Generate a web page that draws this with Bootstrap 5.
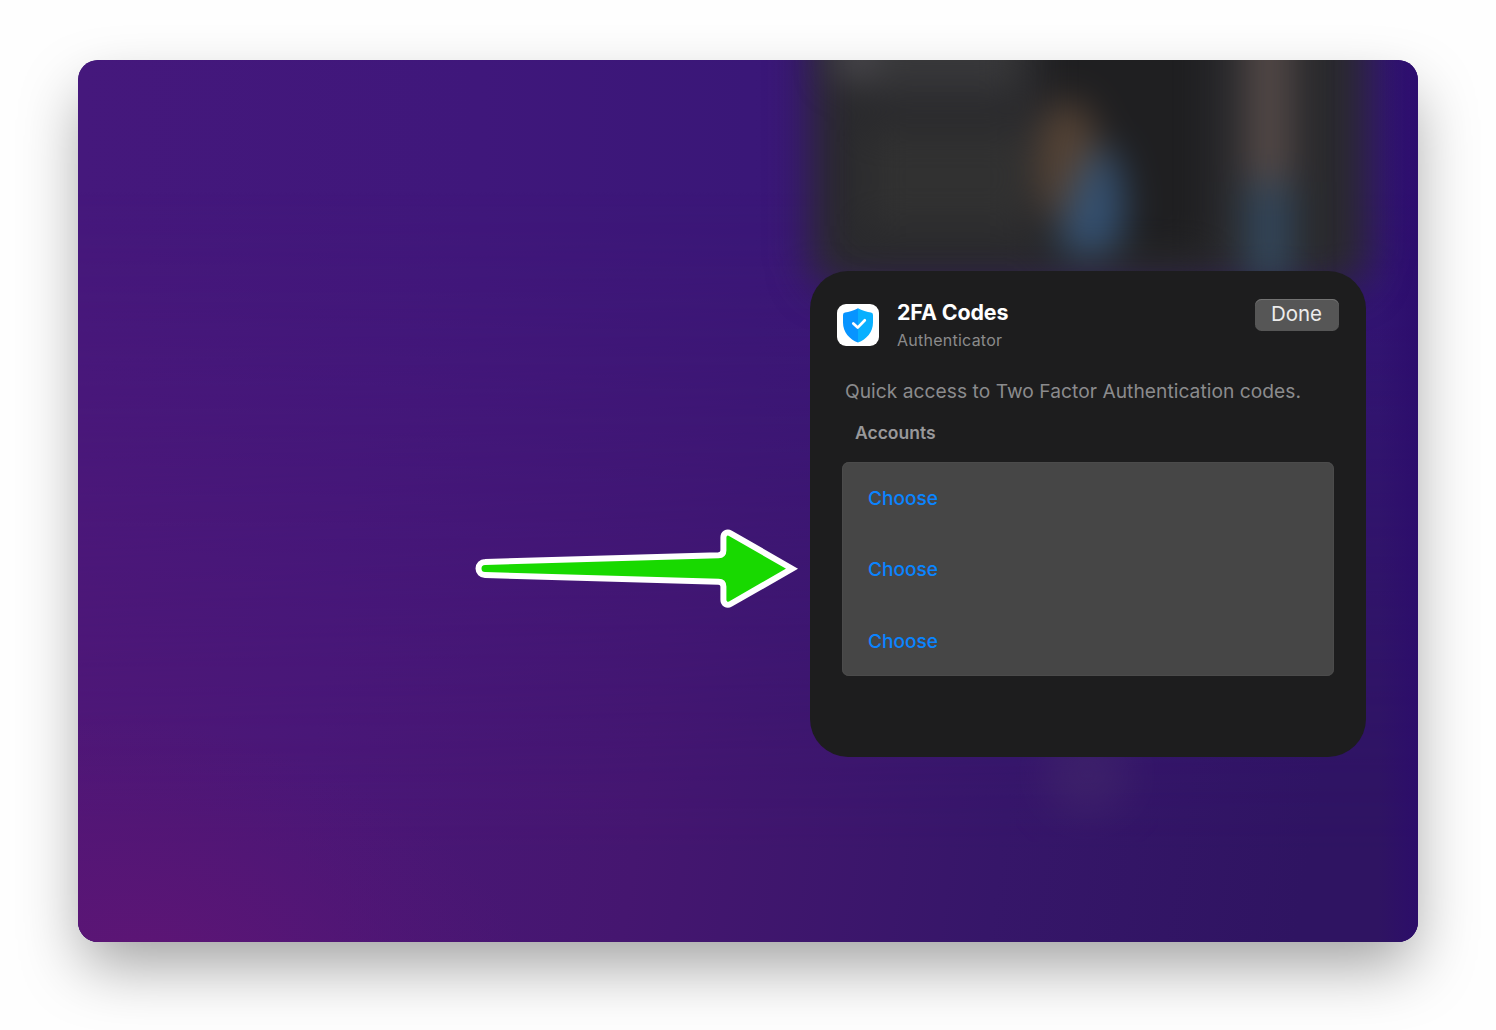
<!DOCTYPE html>
<html lang="en">
<head>
<meta charset="utf-8">
<meta name="viewport" content="width=device-width, initial-scale=1">
<title>2FA Codes widget</title>
<link href="https://cdn.jsdelivr.net/npm/bootstrap@5.3.0/dist/css/bootstrap.min.css" rel="stylesheet">
<style>
  body { background: #fefefe; font-family: Inter, "Liberation Sans", sans-serif; height: 1030px; padding: 60px 78px 0; overflow: hidden; }
  .desktop { width: 1340px; height: 882px; border-radius: 20px; box-shadow: 0 28px 62px -5px rgba(0,0,0,.37); padding: 211px 52.5px 0 0; background: #3e1777; }
  .wallpaper { border-radius: 20px; z-index: 0; }
  .pointer { left: 390px; top: 460px; z-index: 2; }
  .widget { width: 555.5px; height: 485.5px; border-radius: 38px; background: #1d1d1e; padding: 28px 27px 0; z-index: 1; }
  .widget-head { height: 66px; }
  .app-icon { margin: 5px 18px 0 0; }
  .w-title { font-size: 21.4px; font-weight: 700; line-height: 28px; color: #fff; letter-spacing: -.1px; margin-top: -1px; }
  .w-sub { font-size: 16px; line-height: 22px; color: #8b8b8c; margin-top: 3px; letter-spacing: .25px; }
  .btn-done { --bs-btn-bg: #565656; --bs-btn-color: #ececec; --bs-btn-border-color: transparent; width: 84px; height: 32px; font-size: 20.5px; line-height: 28px; padding: 0 0 2px; border: 0; border-radius: 6.5px; box-shadow: inset 0 1px 0 #737373; }
  .w-desc { font-size: 19.2px; line-height: 26px; color: #8b8b8d; padding-left: 8px; margin-top: 12.5px; letter-spacing: .04px; }
  .w-label { font-size: 17.5px; font-weight: 600; line-height: 24px; color: #98989a; padding-left: 18px; margin-top: 17.5px; }
  .accounts { --bs-list-group-bg: #464646; --bs-list-group-border-width: 0; --bs-list-group-border-radius: 7px; margin: 17px 5px 0; height: 214px; background: #464646; box-shadow: inset 0 0 0 1px #4b4b4b; }
  .accounts .list-group-item { background: transparent; color: #0a84ff; font-size: 19.1px; font-weight: 450; height: 71.2px; padding: 2px 26px 0; }
</style>
</head>
<body>
<main class="desktop position-relative d-flex justify-content-end align-items-start">
  <svg class="wallpaper position-absolute top-0 start-0" width="1340" height="882" viewBox="0 0 1340 882" aria-hidden="true">
    <defs>
      <linearGradient id="base" x1="0" y1="0" x2="1" y2="0">
        <stop offset="0" stop-color="#45187c"/><stop offset=".3" stop-color="#3f177b"/><stop offset=".5" stop-color="#3a1778"/><stop offset="1" stop-color="#321475"/>
      </linearGradient>
      <linearGradient id="low" x1="0" y1="0" x2="1" y2=".1">
        <stop offset="0" stop-color="#521776"/><stop offset=".25" stop-color="#4b1777"/><stop offset=".5" stop-color="#451670"/><stop offset=".77" stop-color="#361669"/><stop offset="1" stop-color="#2f1462"/>
      </linearGradient>
      <linearGradient id="fade" x1="0" y1="0" x2="0" y2="1">
        <stop offset=".15" stop-color="#000"/><stop offset=".9" stop-color="#fff"/>
      </linearGradient>
      <mask id="lower"><rect width="1340" height="882" fill="url(#fade)"/></mask>
      <radialGradient id="magenta" gradientUnits="userSpaceOnUse" cx="70" cy="900" r="400" gradientTransform="translate(70 900) rotate(12) scale(1 .6) translate(-70 -900)">
        <stop offset="0" stop-color="#5d1575"/><stop offset=".35" stop-color="#5a1575" stop-opacity=".7"/><stop offset="1" stop-color="#541574" stop-opacity="0"/>
      </radialGradient>
      <linearGradient id="edge" x1="0" y1="0" x2="1" y2="0">
        <stop offset="0" stop-color="#2b0b6c" stop-opacity="0"/><stop offset="1" stop-color="#2b0b6c" stop-opacity=".75"/>
      </linearGradient>
      <filter id="b20" x="-30%" y="-30%" width="160%" height="160%" color-interpolation-filters="sRGB"><feGaussianBlur stdDeviation="20"/></filter>
      <filter id="b16" x="-80%" y="-80%" width="260%" height="260%" color-interpolation-filters="sRGB"><feGaussianBlur stdDeviation="18"/></filter>
      <clipPath id="frame"><rect width="1340" height="882" rx="20"/></clipPath>
    </defs>
    <g clip-path="url(#frame)">
      <rect width="1340" height="882" fill="url(#base)"/>
      <rect width="1340" height="882" fill="url(#low)" mask="url(#lower)"/>
      <rect width="1340" height="882" fill="url(#magenta)"/>
      <rect x="1300" width="40" height="882" fill="url(#edge)"/>
      <!-- out-of-focus widget above the panel -->
      <rect x="732" y="-80" width="558" height="308" rx="30" fill="#2a2a2d" filter="url(#b20)"/>
      <g filter="url(#b16)">
        <rect x="790" y="70" width="160" height="96" fill="#313131"/>
        <rect x="965" y="-60" width="165" height="255" fill="#1f1f21"/>
        <rect x="795" y="-40" width="145" height="70" fill="#38383a"/>
        <circle cx="777" cy="-2" r="23" fill="#4d4b51"/>
        <ellipse cx="990" cy="104" rx="31" ry="64" fill="#554335"/>
        <path d="M1026 84 C1050 100 1054 182 1032 194 H984 C974 184 992 130 1008 104 Z" fill="#345070"/>
        <rect x="1169" y="-50" width="44" height="200" fill="#554a48"/>
        <rect x="1167" y="122" width="48" height="100" fill="#33465a"/>
      </g>
      <ellipse cx="1009" cy="714" rx="44" ry="42" fill="#43296b" opacity=".55" filter="url(#b20)"/>
    </g>
  </svg>

  <svg class="pointer position-absolute" width="336" height="96" viewBox="468 520 336 96" aria-hidden="true">
    <path d="M485 562 L718.500 555.300 Q723.400 555 723.400 550.500 V537.500 C723.400 533.500 727 531.300 730.500 533.300 L792 568.700 L730.500 604 C727 606 723.400 603.800 723.400 599.800 V586.500 Q723.400 582 718.500 581.800 L485 575 A6.500 6.500 0 0 1 485 562 Z" fill="#18d900" stroke="#fff" stroke-width="6" stroke-miterlimit="8"/>
  </svg>

  <section class="widget position-relative">
    <header class="widget-head d-flex align-items-start">
      <svg class="app-icon flex-shrink-0" width="42" height="42" viewBox="0 0 42 42" aria-hidden="true">
        <rect width="42" height="42" rx="9" fill="#fff"/>
        <path d="M21 4.200 C17.500 6.500 11.500 7.800 8 8.600 Q6 9.100 6 11 V18.500 C6 28 12.500 35.500 21 38.500Z" fill="#0794ff"/>
        <path d="M21 4.200 C24.500 6.500 30.500 7.800 34 8.600 Q36 9.100 36 11 V18.500 C36 28 29.500 35.500 21 38.500Z" fill="#08b0ff"/>
        <path d="M16.300 19.400 L20.700 23.600 L27.800 16.300" fill="none" stroke="#fff" stroke-width="2.700" stroke-linecap="round" stroke-linejoin="round"/>
      </svg>
      <div class="flex-grow-1">
        <div class="w-title">2FA Codes</div>
        <div class="w-sub">Authenticator</div>
      </div>
      <button type="button" class="btn btn-done">Done</button>
    </header>
    <div class="w-desc text-nowrap">Quick access to Two Factor Authentication codes.</div>
    <div class="w-label">Accounts</div>
    <div class="list-group accounts">
      <a class="list-group-item d-flex align-items-center">Choose</a>
      <a class="list-group-item d-flex align-items-center">Choose</a>
      <a class="list-group-item d-flex align-items-center">Choose</a>
    </div>
  </section>
</main>
<script src="https://cdn.jsdelivr.net/npm/bootstrap@5.3.0/dist/js/bootstrap.bundle.min.js"></script>
</body>
</html>
